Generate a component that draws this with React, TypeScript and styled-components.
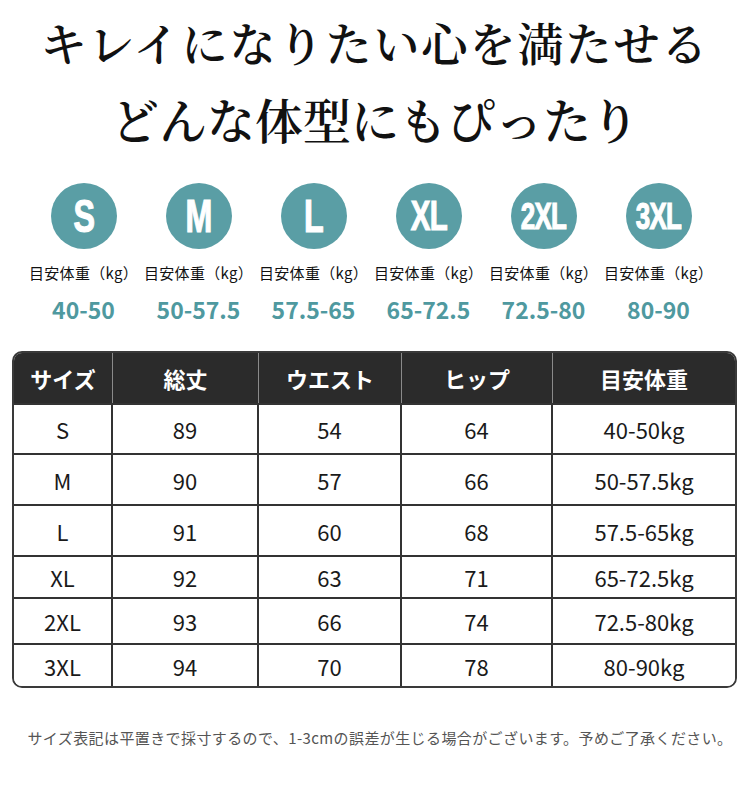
import React from 'react';
import styled, { createGlobalStyle } from 'styled-components';

const GlobalStyle = createGlobalStyle`
    html, body {
        margin: 0;
        padding: 0;
        background: #ffffff;
    }
    body {
        font-family: "Noto Sans CJK JP", "Noto Sans", sans-serif;
    }
`;

const teal = '#5a9ea5';

const sizes = [
    { label: 'S', letter: 46, weight: '40-50' },
    { label: 'M', letter: 46, weight: '50-57.5' },
    { label: 'L', letter: 46, weight: '57.5-65' },
    { label: 'XL', letter: 42, weight: '65-72.5' },
    { label: '2XL', letter: 37, weight: '72.5-80' },
    { label: '3XL', letter: 37, weight: '80-90' },
];

const headers = ['サイズ', '総丈', 'ウエスト', 'ヒップ', '目安体重'];

const rows = [
    { h: 50, cells: ['S', '89', '54', '64', '40-50kg'] },
    { h: 51, cells: ['M', '90', '57', '66', '50-57.5kg'] },
    { h: 51, cells: ['L', '91', '60', '68', '57.5-65kg'] },
    { h: 42, cells: ['XL', '92', '63', '71', '65-72.5kg'] },
    { h: 46, cells: ['2XL', '93', '66', '74', '72.5-80kg'] },
    { h: 41, cells: ['3XL', '94', '70', '78', '80-90kg'] },
];

const Page = styled.div`
    width: 750px;
    height: 796px;
    overflow: hidden;
    background: #fff;
`;

const Title = styled.div`
    padding-top: 2px;
    text-align: center;
    font-family: "Noto Serif CJK JP", "Noto Sans CJK JP", serif;
    font-weight: 600;
    color: #111;
`;

const TitleLine = styled.div<{ $size: number; $spacing: number }>`
    height: 78px;
    line-height: 78px;
    font-size: ${p => p.$size}px;
    letter-spacing: ${p => p.$spacing}px;
    white-space: nowrap;
`;

const SizeGrid = styled.div`
    display: grid;
    grid-template-columns: repeat(6, 115px);
    padding-left: 26px;
    margin-top: 25px;
`;

const SizeItem = styled.div`
    display: flex;
    flex-direction: column;
    align-items: center;
`;

const Circle = styled.div`
    width: 66px;
    height: 66px;
    border-radius: 50%;
    background: ${teal};
    display: flex;
    align-items: center;
    justify-content: center;
`;

const CircleLetter = styled.span<{ $size: number }>`
    display: inline-block;
    font-family: "Liberation Sans", Arial, sans-serif;
    font-weight: 700;
    font-size: ${p => p.$size}px;
    line-height: 1;
    color: #fff;
    -webkit-text-stroke: 1.2px #fff;
    transform: scaleX(0.7);
    letter-spacing: -1px;
`;

const WeightLabel = styled.div`
    margin-top: 14px;
    height: 20px;
    line-height: 20px;
    font-size: 15px;
    letter-spacing: 0.3px;
    color: #111;
    white-space: nowrap;
`;

const WeightValue = styled.div`
    margin-top: 11px;
    height: 30px;
    line-height: 30px;
    font-size: 23px;
    font-weight: 700;
    color: #4f999f;
    white-space: nowrap;
`;

const Table = styled.div`
    box-sizing: border-box;
    width: 725px;
    margin: 27px 0 0 12px;
    border: 2px solid #3a3a3a;
    border-radius: 10px;
    overflow: hidden;
`;

const Row = styled.div<{ $h: number; $head?: boolean; $last?: boolean }>`
    box-sizing: border-box;
    display: grid;
    grid-template-columns: 99px 146px 143px 151px 182px;
    height: ${p => p.$h}px;
    background: ${p => (p.$head ? '#2b2b2b' : '#fff')};
    border-bottom: ${p => (p.$last ? 'none' : '2px solid #333')};
`;

const HeadCell = styled.div`
    display: flex;
    align-items: center;
    justify-content: center;
    color: #fff;
    font-size: 22px;
    font-weight: 700;
    border-right: 1px solid #8a8a8a;
    &:last-child {
        border-right: none;
    }
`;

const Cell = styled.div`
    display: flex;
    align-items: center;
    justify-content: center;
    color: #1a1a1a;
    font-size: 22px;
    border-right: 2px solid #333;
    &:last-child {
        border-right: none;
    }
`;

const Note = styled.div`
    margin-top: 35px;
    padding-left: 10px;
    height: 30px;
    line-height: 30px;
    text-align: center;
    font-size: 15px;
    letter-spacing: 0.4px;
    color: #555;
    white-space: nowrap;
`;

export default function App() {
    return (
        <Page>
            <GlobalStyle />
            <Title>
                <TitleLine $size={46} $spacing={2}>キレイになりたい心を満たせる</TitleLine>
                <TitleLine $size={48} $spacing={0}>どんな体型にもぴったり</TitleLine>
            </Title>

            <SizeGrid>
                {sizes.map(s => (
                    <SizeItem key={s.label}>
                        <Circle>
                            <CircleLetter $size={s.letter}>{s.label}</CircleLetter>
                        </Circle>
                        <WeightLabel>目安体重（kg）</WeightLabel>
                        <WeightValue>{s.weight}</WeightValue>
                    </SizeItem>
                ))}
            </SizeGrid>

            <Table>
                <Row $h={52} $head>
                    {headers.map(h => (
                        <HeadCell key={h}>{h}</HeadCell>
                    ))}
                </Row>
                {rows.map((r, i) => (
                    <Row key={r.cells[0]} $h={r.h} $last={i === rows.length - 1}>
                        {r.cells.map((c, j) => (
                            <Cell key={j}>{c}</Cell>
                        ))}
                    </Row>
                ))}
            </Table>

            <Note>サイズ表記は平置きで採寸するので、1-3cmの誤差が生じる場合がございます。予めご了承ください。</Note>
        </Page>
    );
}
